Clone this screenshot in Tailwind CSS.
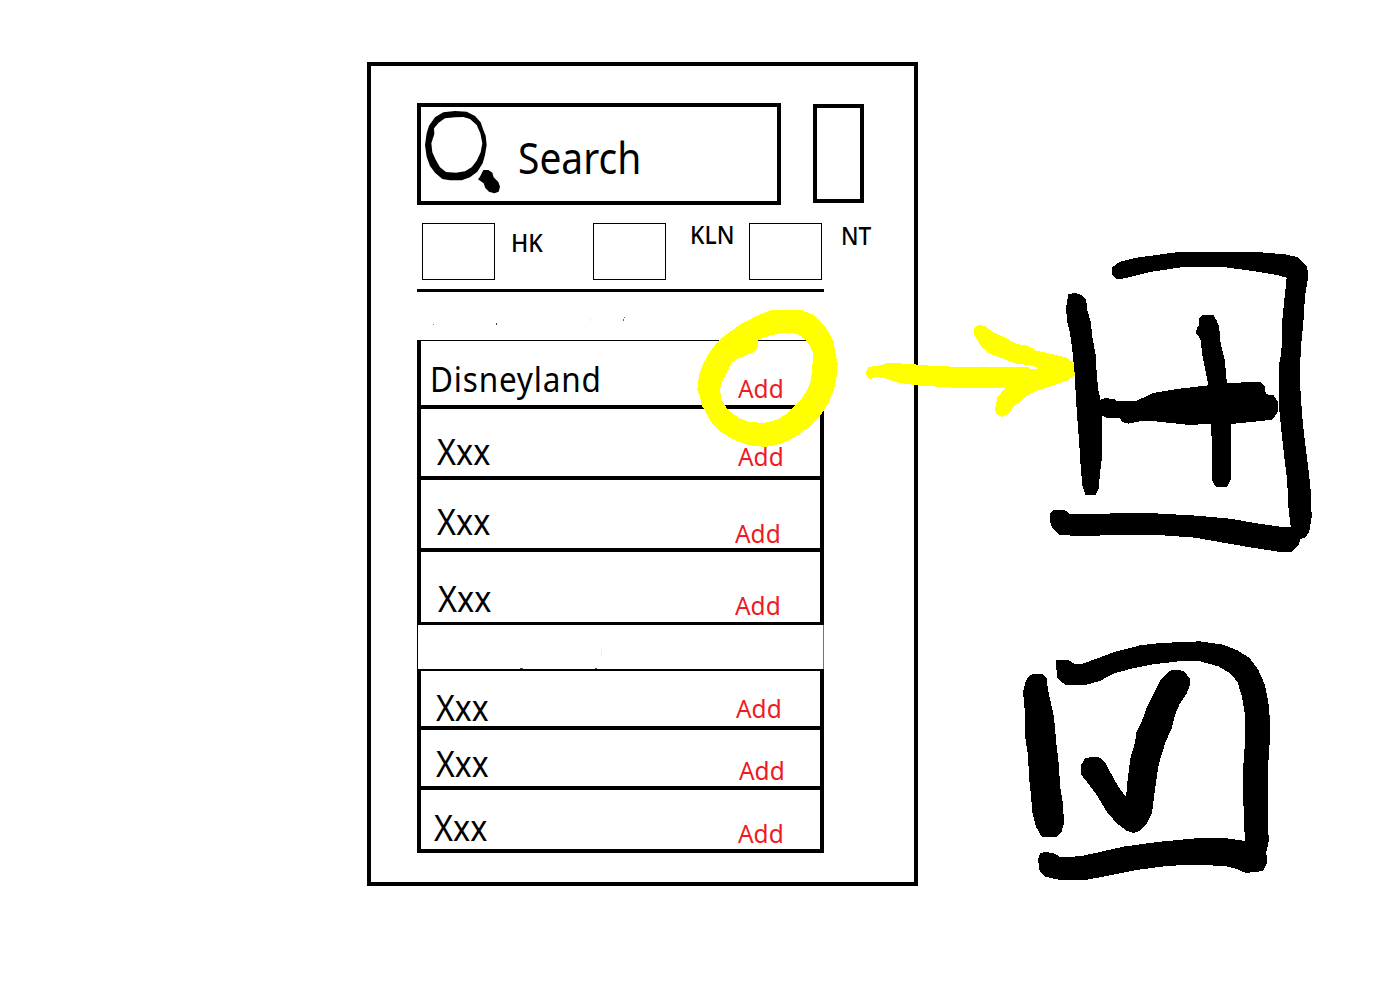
<!DOCTYPE html>
<html lang="en">
<head>
<meta charset="utf-8">
<title>Place list wireframe</title>
<script src="https://cdn.jsdelivr.net/npm/@tailwindcss/browser@4"></script>
</head>
<body class="bg-white">
<div class="relative w-[1392px] h-[986px] overflow-hidden pt-[62px] pl-[367px] font-['Noto_Sans','Open_Sans',sans-serif] text-black leading-none whitespace-nowrap">
  <main class="w-[551px] h-[824px] border-4 border-black pt-[37px] pl-[46px]">
    <header class="flex items-start">
      <div class="flex w-[364px] h-[102px] border-4 border-black">
        <svg class="w-20 h-[94px] shrink-0" viewBox="183 156 240 282">
          <path fill-rule="evenodd" d="M285 168L320 170L345 183L362 202L370 225L377 242L380 270L375 300L368 325L352 350L330 367L305 376L270 376L247 372L225 353L210 333L200 305L195 270L200 235L207 212L225 187L250 172ZM285 187L255 190L236 203L222 220L223 237L214 265L217 292L226 312L240 337L258 351L288 353L315 349L335 337L350 317L362 292L367 265L361 235L350 210L330 192L310 186Z"/>
          <path d="M370 345L385 345L397 353L401 367L415 381L420 395L416 410L403 415L387 410L376 399L371 385L354 373L360 365Z"/>
        </svg>
        <span class="mt-[28px] ml-[17px] text-[44px] origin-left scale-x-[.885]">Search</span>
      </div>
      <div class="ml-[32px] mt-px w-[51px] h-[99px] border-4 border-black"></div>
    </header>
    <section class="flex items-start w-[480px] mt-[18px] pl-[5px] text-[26px] font-medium">
      <div class="w-[73px] h-[57px] border border-black"></div>
      <span class="w-[81px] ml-[16px] mt-[6px] origin-left scale-x-[.89]">HK</span>
      <div class="ml-px w-[73px] h-[57px] border border-black"></div>
      <span class="w-[57px] ml-[24px] mt-[-2px] origin-left scale-x-[.88]">KLN</span>
      <div class="ml-[2px] w-[73px] h-[57px] border border-black"></div>
      <span class="ml-[19px] mt-[-1px] origin-left scale-x-[.87]">NT</span>
    </section>
    <hr class="mt-[9px] w-[407px] border-0 h-[3px] bg-black">
    <ul class="mt-[48px] w-[407px]">
      <li class="grid grid-cols-[316px_1fr] items-start h-[69px] border-l-4 border-b-4 border-t border-black">
        <span class="ml-[9px] mt-[20px] text-[35px] tracking-[.9px] origin-left scale-x-[.9]">Disneyland</span>
        <span class="ml-px mt-[34px] text-[26px] text-[#ed1c24] origin-left scale-x-[.94]">Add</span>
      </li>
      <li class="grid grid-cols-[316px_1fr] items-start h-[71px] border-x-4 border-b-4 border-black">
        <span class="ml-[16px] mt-[25px] text-[36px] origin-left scale-x-[.9]">Xxx</span>
        <span class="ml-px mt-[34px] text-[26px] text-[#ed1c24] origin-left scale-x-[.94]">Add</span>
      </li>
      <li class="grid grid-cols-[316px_1fr] items-start h-[72px] border-x-4 border-b-4 border-black">
        <span class="ml-[16px] mt-[24px] text-[36px] origin-left scale-x-[.9]">Xxx</span>
        <span class="-ml-[2px] mt-[40px] text-[26px] text-[#ed1c24] origin-left scale-x-[.94]">Add</span>
      </li>
      <li class="grid grid-cols-[316px_1fr] items-start h-[73px] border-x-4 border-b-3 border-black">
        <span class="ml-[17px] mt-[29px] text-[36px] origin-left scale-x-[.9]">Xxx</span>
        <span class="-ml-[2px] mt-[40px] text-[26px] text-[#ed1c24] origin-left scale-x-[.94]">Add</span>
      </li>
      <li class="h-[44px] border-l border-l-black border-r border-r-neutral-500"></li>
      <li class="grid grid-cols-[316px_1fr] items-start h-[61px] border-x-4 border-t-2 border-b-4 border-black">
        <span class="ml-[15px] mt-[19px] text-[36px] origin-left scale-x-[.89]">Xxx</span>
        <span class="-ml-px mt-[24px] text-[26px] text-[#ed1c24] origin-left scale-x-[.94]">Add</span>
      </li>
      <li class="grid grid-cols-[316px_1fr] items-start h-[60px] border-x-4 border-b-4 border-black">
        <span class="ml-[15px] mt-[16px] text-[36px] origin-left scale-x-[.89]">Xxx</span>
        <span class="ml-[2px] mt-[27px] text-[26px] text-[#ed1c24] origin-left scale-x-[.94]">Add</span>
      </li>
      <li class="grid grid-cols-[316px_1fr] items-start h-[63px] border-x-4 border-b-4 border-black">
        <span class="ml-[13px] mt-[20px] text-[36px] origin-left scale-x-[.9]">Xxx</span>
        <span class="ml-px mt-[30px] text-[26px] text-[#ed1c24] origin-left scale-x-[.94]">Add</span>
      </li>
    </ul>
  </main>

  <!-- Freehand annotations over the wireframe -->
  <svg class="absolute inset-0 w-[1392px] h-[986px]" viewBox="0 0 1392 986" shape-rendering="crispEdges">
    <!-- stray pen specks -->
    <path fill="#ff4040" d="M433 324h1v1h-1z"/>
    <path fill="#444" d="M496 323h1v2h-1zM520 668h3v1h-3zM595 668h2v1h-2z"/>
    <path fill="#3a6ea5" d="M623 319h1v2h-1zM624 317h1v1h-1z"/>
    <path fill="#eee" d="M590 318h1v3h-1zM601 649h1v7h-1z"/>
    <g fill="#ff0" fill-rule="evenodd">
      <path transform="translate(660 300) scale(.33333)" d="M335 30L425 30L460 44L495 78L521 125L526 155L533 190L530 230L522 270L505 310L480 348L452 378L415 405L380 425L340 437L315 441L270 436L235 425L205 410L177 392L155 368L140 342L126 317L120 290L112 270L117 225L130 190L150 155L175 122L205 99L240 74L285 50ZM385 98L355 101L325 108L295 119L293 142L280 157L255 168L230 177L215 189L200 218L188 240L180 270L185 303L205 330L235 353L270 367L315 368L350 360L380 342L403 320L425 295L442 270L453 240L457 205L459 160L450 138L435 117L410 102Z"/>
      <path transform="translate(850 240) scale(.33333)" d="M48 395L55 381L85 377L115 369L170 371L240 377L310 380L535 381L543 387L568 385L540 376L495 370L465 358L420 341L395 322L382 300L372 282L374 261L389 255L405 258L430 277L470 295L500 312L530 316L560 332L600 341L650 353L675 372L678 404L650 423L600 440L560 452L530 467L495 497L470 524L456 531L440 524L435 508L442 472L466 444L310 443L200 436L145 428L110 416L80 411L60 417L50 408Z"/>
    </g>
    <g transform="translate(850 240) scale(.33333)">
      <path d="M787 82L810 65L860 53L985 36L1220 36L1305 43L1345 52L1372 80L1374 115L1365 170L1360 250L1352 330L1350 430L1356 520L1362 580L1371 655L1377 700L1383 760L1385 830L1378 875L1365 893L1352 897L1345 915L1325 935L1285 935L1200 922L1120 908L1035 893L910 884L810 884L690 889L628 884L606 862L600 845L600 820L610 810L645 811L660 822L730 823L810 819L915 820L1040 827L1140 836L1220 850L1290 860L1322 860L1314 790L1312 725L1304 660L1296 590L1288 510L1287 375L1294 340L1297 240L1304 170L1310 113L1280 105L1215 94L1120 81L1000 81L900 96L825 115L798 117L787 105Z"/>
      <path d="M655 162L675 159L695 165L708 178L713 215L722 245L727 290L738 350L740 400L745 450L750 470L750 480L765 475L790 476L802 483L860 482L910 459L980 447L1075 436L1068 400L1058 350L1051 297L1039 280L1040 263L1048 257L1048 236L1058 225L1090 225L1099 240L1107 257L1112 310L1124 360L1131 430L1180 427L1230 426L1244 440L1248 463L1270 465L1285 487L1284 515L1268 538L1235 543L1142 552L1142 718L1132 740L1098 741L1086 722L1087 645L1083 553L1010 554L915 544L875 543L835 551L815 545L810 534L768 533L756 526L756 650L751 690L746 745L736 765L706 765L697 735L692 680L687 600L683 550L678 480L674 400L667 330L660 280L650 240L649 200Z"/>
    </g>
    <g transform="translate(1010 630) scale(.33333)">
      <path d="M139 90L175 91L196 102L218 101L260 86L310 67L390 46L450 39L570 34L640 44L680 60L718 83L745 120L765 165L775 215L780 270L779 340L774 410L774 540L776 635L769 665L771 700L760 722L735 727L705 728L680 717L645 708L550 704L470 708L380 720L280 740L230 749L145 749L105 740L89 723L84 690L90 671L105 666L130 669L150 681L210 679L270 666L340 650L450 635L570 624L650 625L705 633L701 560L699 420L704 350L704 250L696 200L682 155L660 130L625 109L570 94L505 94L430 103L360 117L310 131L270 153L230 164L165 164L140 143Z"/>
      <path d="M60 135L75 132L97 133L110 146L114 180L124 225L132 260L138 330L146 400L151 475L159 520L162 580L154 608L138 621L95 620L78 590L67 548L63 495L57 440L54 375L46 325L45 250L39 185L47 153Z"/>
      <path d="M480 122L500 119L523 124L539 145L541 163L530 190L510 220L495 255L485 295L467 335L456 370L446 405L439 450L432 500L426 550L410 580L390 603L370 609L350 602L320 580L290 545L260 495L230 455L214 435L213 405L225 386L245 380L270 383L285 397L300 425L325 470L348 501L354 440L362 380L376 335L378 310L395 275L412 228L435 182L455 145Z"/>
    </g>
  </svg>
</div>
</body>
</html>
